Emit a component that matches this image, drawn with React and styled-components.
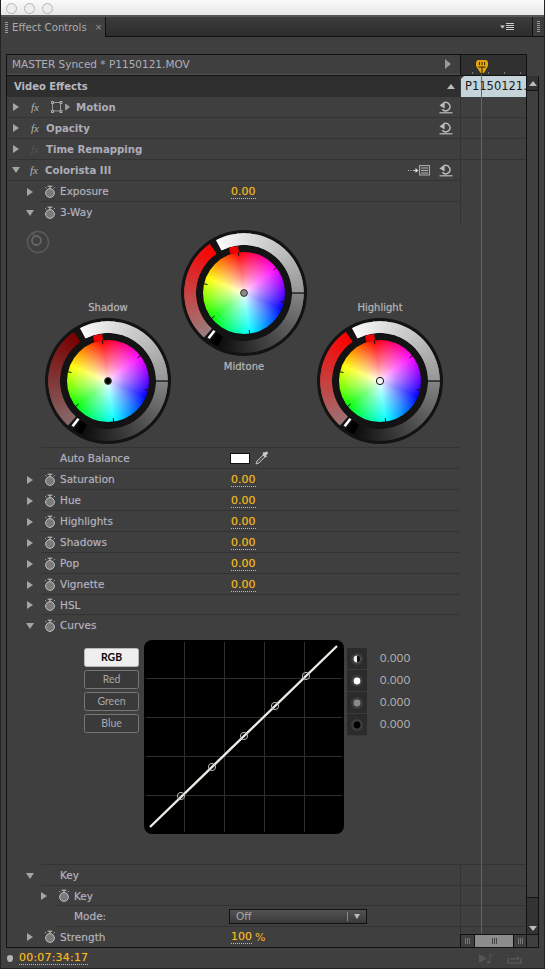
import React from 'react';
import styled, { createGlobalStyle } from 'styled-components';

const Global = createGlobalStyle`
  html, body { margin: 0; padding: 0; background: #3f3f3f; }
  * { box-sizing: border-box; }
`;
const UI = `"DejaVu Sans", "Liberation Sans", sans-serif`;
const Page = styled.div`
  width: 545px; height: 969px; overflow: hidden; background: #3f3f3f;
  display: flex; flex-direction: column; font-family: ${UI}; color: #adadb5;
  border-left: 1px solid #222; border-right: 1px solid #222; border-bottom: 1px solid #222;
`;
const TitleBar = styled.div`
  height: 17px; flex: none; margin: 0 -1px; padding: 3px 0 0 6px; display: flex; align-items: flex-start; gap: 7px;
  background: linear-gradient(#fbfbfb, #e6e6e6); border-bottom: 2px solid #555;
`;
const Traffic = styled.span`
  width: 11px; height: 11px; border-radius: 50%; background: #ededed; border: 1px solid #b5b5b5;
`;
const TabBar = styled.div`
  height: 20px; flex: none; display: flex; align-items: stretch;
  background: linear-gradient(#3c3c3c, #2c2c2c); border-bottom: 1px solid #111;
`;
const Tab = styled.div`
  width: 105px; margin-bottom: -1px; display: flex; align-items: center; background: #404040; white-space: nowrap;
  border-right: 1px solid #111; font-size: 10.2px; color: #ababab; padding-left: 4px; gap: 4px;
`;
const Grip = styled.span`
  width: 3px; height: 11px; flex: none;
  background: repeating-linear-gradient(#999 0 1px, transparent 1px 2px);
`;
const TabClose = styled.span` font-size: 9px; margin-left: 4px; color: #999; `;
const TabSpacer = styled.div` flex: 1; `;
const MenuSlot = styled.div`
  width: 30px; margin-right: 12px; display: flex; align-items: center; justify-content: flex-end; padding-right: 5px;
`;
const TabEnd = styled.div`
  width: 12px; border-left: 1px solid #111; display: flex; align-items: center; justify-content: center; background: #3c3c3c;
`;
const Frame = styled.div`
  margin: 17px 0 0 5px; display: grid; grid-template-columns: 454px 67px 12px; grid-template-rows: 22px auto;
`;
const MasterBar = styled.div`
  border: 1px solid #111; border-right: 0; display: flex; align-items: center; justify-content: space-between;
  font-size: 10.5px; padding: 0 9px 3px 5px; color: #afafb8; background: #3f3f3f;
  box-shadow: inset 0 -1px 0 #525252;
`;
const Ruler = styled.div`
  border: 1px solid #111; background: #303030; position: relative;
  background-image: linear-gradient(#777, #777), linear-gradient(#777, #777), linear-gradient(#777, #777), linear-gradient(#777, #777);
  background-size: 1px 2px; background-repeat: no-repeat;
  background-position: 11px 17px, 27px 17px, 43px 17px, 59px 17px;
`;
const PlayheadMark = styled.svg` position: absolute; left: 15px; top: 5px; `;
const Blank = styled.div``;
const Tree = styled.div` border-left: 1px solid #111; border-bottom: 1px solid #111; display: flex; flex-direction: column; `;
const HeaderRow = styled.div`
  height: 21px; background: #2f2f2f; display: flex; align-items: center; justify-content: space-between;
  padding: 0 5px 1px 7px; font-size: 10px; font-weight: 700; color: #b8b8c0;
`;
const Row = styled.div` height: ${p => p.$h || 21}px; display: flex; align-items: stretch; `;
const Gutter = styled.div`
  width: ${p => p.$w}px; flex: none; display: flex; align-items: center; padding-left: ${p => p.$w - 14}px;
`;
const RowBody = styled.div`
  flex: 1; min-width: 0; display: flex; align-items: center; position: relative;
  border-bottom: 1px solid ${p => (p.$noline ? 'transparent' : '#333')};
  padding-left: ${p => p.$pad || 0}px;
`;
const Twirl = styled.span`
  width: 0; height: 0; flex: none;
  ${p => p.$open
    ? 'border-left: 4.5px solid transparent; border-right: 4.5px solid transparent; border-top: 6px solid #a5a5a5; margin: 0 -2px 0 -1px;'
    : 'border-top: 4.5px solid transparent; border-bottom: 4.5px solid transparent; border-left: 6px solid #a5a5a5;'}
`;
const Fx = styled.span`
  font: italic 11px "Liberation Serif", serif; width: 15px; margin-left: 12px; flex: none;
  color: ${p => (p.$dim ? '#555' : '#b5b5b5')};
`;
const TopLabel = styled.span` font-size: 10.2px; font-weight: 700; color: #adadb9; `;
const SubLabel = styled.span`
  font-size: 10.5px; color: #b2b2be; width: ${p => p.$w || 170}px; flex: none; padding-left: ${p => p.$pad || 0}px;
  text-shadow: 0 0 1px rgba(178, 178, 190, .45);
`;
const Value = styled.span`
  font-size: 11px; color: #f7b91e; border-bottom: 1px dotted #f7b91e; line-height: 11px; padding-bottom: 1px; margin-top: 2px;
  text-shadow: 0 0 1px rgba(247, 185, 30, .45);
`;
const ValueUnit = styled.span` font-size: 11px; color: #f7b91e; margin: 2px 0 0 3px; `;
const Watch = styled.svg` flex: none; margin: 0 4px 0 3px; `;
const RightIcons = styled.div` margin-left: auto; display: flex; gap: 9px; align-items: center; padding-right: 7px; `;
const OffWrap = styled.div` display: flex; height: 225px; `;
const OffCell = styled.div` width: 34px; flex: none; padding: 7px 0 0 19px; `;
const OffIcon = styled.svg` display: block; overflow: visible; `;
const WheelPanel = styled.div`
  flex: 1; height: 225px; display: flex; border-bottom: 1px solid #333; align-items: flex-start; gap: 10px; padding-left: 4px;
`;
const WheelColumn = styled.div`
  width: 126px; display: flex; flex-direction: column; align-items: center; padding-top: ${p => p.$top}px;
`;
const WheelLabel = styled.div`
  height: 14px; line-height: 14px; font-size: 10px; color: #b4b4b4; margin: ${p => p.$m};
  text-shadow: 0 0 1px rgba(180, 180, 180, .6);
`;
const WheelSvg = styled.svg` display: block; flex: none; `;
const HueDisc = styled.div`
  width: 82px; height: 82px; border-radius: 50%;
  background:
    radial-gradient(closest-side, rgba(255,255,255,.95) 0, rgba(255,255,255,.5) 42%, rgba(255,255,255,0) 100%),
    conic-gradient(from -8deg, #f00, #f0f, #00f, #0ff, #0f0, #ff0, #f00);
`;
const Swatch = styled.span` width: 20px; height: 11px; background: #fff; border: 1px solid #111; flex: none; `;
const Dropper = styled.svg` margin-left: 5px; flex: none; `;
const CurvesArea = styled.div`
  height: 229px; border-bottom: 1px solid #333; margin-left: 34px; display: flex; align-items: flex-start;
  padding: 4px 0 0 43px;
`;
const ChannelList = styled.div` width: 55px; margin-top: 8px; display: flex; flex-direction: column; gap: 3px; flex: none; `;
const Channel = styled.div`
  height: 19px; border-radius: 2.5px; display: flex; align-items: center; justify-content: center; padding-bottom: 2px;
  font: ${p => (p.$on ? 700 : 400)} 10.5px "Lato", sans-serif;
  color: ${p => (p.$on ? '#0a0a0a' : '#a8a8a8')};
  background: ${p => (p.$on ? '#efefef' : '#3a3a3a')};
  border: 1px solid ${p => (p.$on ? '#b8b8b8' : '#777')};
`;
const CurveSvg = styled.svg` flex: none; margin-left: 5px; display: block; `;
const Zones = styled.div`
  width: 20px; margin: 8px 0 0 3px; flex: none; background: #2b2b2b; display: flex; flex-direction: column; padding: 0;
`;
const ZoneCell = styled.div` height: 22px; display: flex; align-items: center; justify-content: center; border-bottom: 1px solid #3a3a3a; `;
const ZoneVals = styled.div` margin: 8px 0 0 13px; display: flex; flex-direction: column; `;
const ZoneVal = styled.div` height: 22px; font: 400 11px/20px "Lato", sans-serif; letter-spacing: .5px; color: #b0b0b0; `;
const Dropdown = styled.div`
  width: 138px; height: 15px; border: 1px solid #111;
  background: linear-gradient(#525252, #3a3a3a); font-size: 10.5px; color: #a8a8a8; line-height: 12px; padding-left: 6px;
  display: flex; align-items: center; justify-content: space-between;
`;
const DropArrow = styled.span`
  width: 19px; height: 9px; border-left: 1px solid #888; display: flex; align-items: center; justify-content: center;
  &::after { content: ''; border-left: 3.5px solid transparent; border-right: 3.5px solid transparent; border-top: 5px solid #bbb; }
`;
const TimeCol = styled.div`
  position: relative; border-right: 1px solid #111; border-bottom: 1px solid #111; display: flex; flex-direction: column; min-width: 0;
`;
const Playline = styled.span` position: absolute; left: 21px; top: -2px; bottom: 13px; width: 1px; background: #c43c3c; `;
const Clip = styled.div`
  height: 21px; flex: none; overflow: hidden; white-space: nowrap; background: #c5d4da; color: #161a20;
  font-size: 11.5px; line-height: 20px; padding-left: 4px; margin-left: 1px;
  clip-path: polygon(3px 0, 100% 0, 100% 100%, 0 100%, 0 3px);
`;
const TimeRow = styled.div`
  height: ${p => p.$h || 21}px; flex: none; border-left: 1px solid #333;
  border-bottom: 1px solid ${p => (p.$line ? '#333' : 'transparent')};
`;
const TimeSpacer = styled.div` flex: 1; border-bottom: 1px solid #333; `;
const HScroll = styled.div`
  height: 13px; flex: none; margin-top: auto; border-top: 1px solid #111; display: grid; grid-template-columns: 14px 1fr 13px; background: #3f3f3f;
`;
const HEnd = styled.div`
  display: flex; align-items: center; justify-content: center; border-left: 1px solid #111;
`;
const HThumb = styled.div` background: #8c8c8c; border-left: 1px solid #111; display: flex; align-items: center; justify-content: center; `;
const HGrip = styled.span`
  width: ${p => p.$w}px; height: 6px;
  background: repeating-linear-gradient(90deg, ${p => p.$c} 0 1px, transparent 1px 2px);
`;
const VScroll = styled.div` border-right: 1px solid #111; border-bottom: 1px solid #111; display: flex; flex-direction: column; `;
const VUp = styled.div` height: 15px; flex: none; display: flex; justify-content: center; align-items: center; border-bottom: 1px solid #111; background: #333; `;
const VThumb = styled.div` flex: 1; border-bottom: 1px solid #111; background: #3f3f3f; `;
const VTrack = styled.div` height: 37px; flex: none; background: #333; display: flex; justify-content: center; align-items: flex-end; padding-bottom: 3px; border-bottom: 1px solid #111; `;
const VCorner = styled.div` height: 12px; flex: none; background: #3f3f3f; `;
const Tri = styled.span`
  width: 0; height: 0; border-left: 4px solid transparent; border-right: 4px solid transparent;
  ${p => (p.$down ? 'border-top: 5px solid #bbb;' : 'border-bottom: 5px solid #bbb;')}
`;
const TriRight = styled.span` width: 0; height: 0; border-top: 5px solid transparent; border-bottom: 5px solid transparent; border-left: 6px solid #999; `;
const Footer = styled.div` height: 20px; flex: none; display: flex; align-items: center; padding: 0 6px; `;
const FootDot = styled.span` width: 6px; height: 7px; border-radius: 50% 50% 50% 50% / 40% 40% 60% 60%; background: #b5b5b5; flex: none; `;
const FootTime = styled(Value)` margin: 0 0 0 6px; font-size: 11px; letter-spacing: .2px; `;
const FootIcons = styled.div` margin-left: auto; display: flex; gap: 13px; align-items: center; margin-right: 16px; `;

const rad = a => ((a - 90) * Math.PI) / 180;
const pt = (r, a) => [63 + r * Math.cos(rad(a)), 63 + r * Math.sin(rad(a))];
const BAND_R = 53.85, BAND_W = 11.7;
const arc = (a0, a1) => {
  const [x0, y0] = pt(BAND_R, a0), [x1, y1] = pt(BAND_R, a1);
  return `M${x0.toFixed(2)} ${y0.toFixed(2)}A${BAND_R} ${BAND_R} 0 0 1 ${x1.toFixed(2)} ${y1.toFixed(2)}`;
};
const mix = (c0, c1, t) => {
  const v = c0.map((c, i) => Math.round(c + (c1[i] - c) * t));
  return `rgb(${v.join(',')})`;
};
function Band({ from, to, c0, c1 }) {
  const parts = [];
  for (let a = from; a < to; a += 1) {
    const t = (a - from) / (to - from);
    parts.push(<path key={a} d={arc(a, Math.min(a + 2, to))} fill="none" strokeWidth={BAND_W} stroke={mix(c0, c1, t)} />);
  }
  return <>{parts}</>;
}
const TICKS = [-8, 52, 103, 172, 232, 283];
const REDS = {
  shadow: [[122, 0, 0], [135, 105, 105]],
  mid: [[255, 0, 0], [155, 125, 125]],
  high: [[255, 0, 0], [155, 115, 115]],
};
const DOTS = {
  shadow: { fill: '#000', stroke: '#444', r: 3.4 },
  mid: { fill: '#8a8a8a', stroke: '#333', r: 3.4 },
  high: { fill: '#f4f4f4', stroke: '#111', r: 3.6 },
};
function ColorWheel({ kind }) {
  const d = DOTS[kind], red = REDS[kind];
  const [tx0, ty0] = pt(48, 218), [tx1, ty1] = pt(57.5, 218);
  return (
    <WheelSvg width="126" height="126" viewBox="0 0 126 126">
      <circle cx="63" cy="63" r="63" fill="#131313" />
      <Band from={-28} to={90} c0={[250, 250, 250]} c1={[150, 150, 150]} />
      <Band from={90} to={206} c0={[132, 132, 132]} c1={[14, 14, 14]} />
      <path d={arc(206, 215)} fill="none" stroke="#000" strokeWidth={BAND_W} />
      <Band from={-138} to={-35} c0={red[1]} c1={red[0]} />
      <line x1={tx0} y1={ty0} x2={tx1} y2={ty1} stroke="#fff" strokeWidth="2.6" />
      <line x1="111" y1="63" x2="123" y2="63" stroke="#0a0a0a" strokeWidth="1.2" />
      <foreignObject x="22" y="22" width="82" height="82"><HueDisc /></foreignObject>
      {TICKS.map(a => {
        const [x0, y0] = pt(37.5, a), [x1, y1] = pt(41.5, a);
        return <line key={a} x1={x0} y1={y0} x2={x1} y2={y1} stroke="#111" strokeWidth="1" />;
      })}
      <rect x="-4.5" y="-3.3" width="9" height="6.6" fill="#f20000" transform={`translate(${pt(44.2, -13).join(' ')}) rotate(-9)`} />
      <circle cx="63" cy="63" r={d.r} fill={d.fill} stroke={d.stroke} strokeWidth="1" />
    </WheelSvg>
  );
}
const Stopwatch = () => (
  <Watch width="12" height="13" viewBox="0 0 12 13">
    <circle cx="6" cy="8" r="4.4" fill="#7a7a7a" stroke="#c0c0c0" strokeWidth="1" />
    <path d="M3.6 1.2h4.8M6 1.2v2.4M2.3 3.200l-1-.8M9.700 3.200l1-.8" stroke="#c8c8c8" strokeWidth="1" fill="none" />
  </Watch>
);
const Reset = () => (
  <svg width="14" height="13" viewBox="0 0 14 13" fill="none">
    <path d="M5 1.600a4.300 4.300 0 1 1-1.700 6.700" stroke="#bcbcbc" strokeWidth="1.400" />
    <path d="M.5 4.400L5.600 .6v7z" fill="#bcbcbc" />
    <path d="M.5 11.800h13" stroke="#bcbcbc" strokeWidth="1.200" />
  </svg>
);
const Preset = () => (
  <svg width="22" height="11" viewBox="0 0 22 11" fill="none">
    <path d="M0 5.500h1M2.500 5.500h1M5 5.500h2" stroke="#bbb" />
    <path d="M7 5.500h2" stroke="#ddd" />
    <path d="M7.500 3l3 2.500-3 2.500z" fill="#ddd" />
    <rect x="11.500" y=".5" width="10" height="9.500" fill="#4a4a4a" stroke="#aaa" />
    <path d="M13 3h7M13 5.500h7M13 8h7" stroke="#aaa" />
  </svg>
);
const MotionIcon = styled.svg` margin: 0 6px 0 5px; flex: none; `;
const MotionBox = () => (
  <MotionIcon width="19" height="12" viewBox="0 0 19 12" fill="none">
    <rect x="1.500" y="1.500" width="8" height="8.500" stroke="#9a9a9a" />
    <path d="M.5 .5h2v2h-2zM9 .5h2v2H9zM.5 9.500h2v2h-2zM9 9.500h2v2H9z" fill="#3f3f3f" stroke="#b5b5b5" />
    <path d="M14.500 3l4 3-4 3z" fill="#999" stroke="#b5b5b5" strokeWidth=".6" />
  </MotionIcon>
);
const POINTS = [[37, 156], [68, 127], [100, 96], [131, 66], [162, 36]];
function Curve() {
  return (
    <CurveSvg width="200" height="194" viewBox="0 0 200 194">
      <rect width="200" height="194" rx="8" fill="#000" />
      {[40, 80, 120, 160].map(x => <line key={x} x1={x + .5} x2={x + .5} y1="2" y2="192" stroke="#2e2e2e" />)}
      {[38, 77, 116, 155].map(y => <line key={y} y1={y + .5} y2={y + .5} x1="2" x2="198" stroke="#2e2e2e" />)}
      <line x1="6" y1="187" x2="193" y2="6" stroke="#ecece4" strokeWidth="2.400" />
      {POINTS.map(([x, y]) => <circle key={x} cx={x} cy={y} r="3.600" fill="none" stroke="#bbb" strokeWidth="1" />)}
    </CurveSvg>
  );
}
const ZoneDot = ({ fill, half }) => (
  <svg width="14" height="14" viewBox="0 0 14 14">
    <circle cx="7" cy="7" r="6" fill="#3c3c3c" />
    <circle cx="7" cy="7" r="3.400" fill={fill} />
    {half && <path d="M7 3.600a3.400 3.400 0 0 1 0 6.800z" fill="#111" />}
  </svg>
);
function SubRow({ label, value, open, noline, gutter = 34, h }) {
  return (
    <Row $h={h}>
      <Gutter $w={gutter}><Twirl $open={open} /></Gutter>
      <RowBody $noline={noline}>
        <Stopwatch />
        <SubLabel $w={171}>{label}</SubLabel>
        {value && <Value>{value}</Value>}
      </RowBody>
    </Row>
  );
}
const Plain = ({ children }) => (
  <Row>
    <RowBody $pad={6}>{children}</RowBody>
  </Row>
);

export default function App() {
  return (
    <Page>
      <Global />
      <TitleBar><Traffic /><Traffic /><Traffic /></TitleBar>
      <TabBar>
        <Tab><Grip />Effect Controls<TabClose>×</TabClose></Tab>
        <TabSpacer />
        <MenuSlot>
          <svg width="15" height="8" viewBox="0 0 15 8">
            <path d="M0 2.500h5l-2.500 3z" fill="#ccc" />
            <path d="M6 .5h8M6 2.500h8M6 4.500h8M6 6.500h8" stroke="#ccc" />
          </svg>
        </MenuSlot>
        <TabEnd><Grip /></TabEnd>
      </TabBar>
      <Frame>
        <MasterBar>MASTER Synced * P1150121.MOV<TriRight /></MasterBar>
        <Ruler>
          <PlayheadMark width="12" height="15" viewBox="0 0 12 15">
            <path d="M1.500 0h9l1.500 2v4l-4 7H4.500L0 6V2z" fill="#e0a30e" />
            <path d="M3.500 2v3M6 2v3M8.500 2v3" stroke="#3a2c00" />
            <path d="M2.500 7h7M6 7v8" stroke="#2a2000" strokeWidth="1" />
          </PlayheadMark>
        </Ruler>
        <Blank />
        <Tree>
          <HeaderRow>Video Effects<Tri /></HeaderRow>
          <Plain><Twirl /><Fx>fx</Fx><MotionBox /><TopLabel>Motion</TopLabel><RightIcons><Reset /></RightIcons></Plain>
          <Plain><Twirl /><Fx>fx</Fx><TopLabel>Opacity</TopLabel><RightIcons><Reset /></RightIcons></Plain>
          <Plain><Twirl /><Fx $dim>fx</Fx><TopLabel>Time Remapping</TopLabel></Plain>
          <Plain><Twirl $open /><Fx>fx</Fx><TopLabel>Colorista III</TopLabel><RightIcons><Preset /><Reset /></RightIcons></Plain>
          <SubRow label="Exposure" value="0.00" />
          <SubRow label="3-Way" open noline />
          <OffWrap>
            <OffCell>
              <OffIcon width="24" height="24" viewBox="0 0 24 24" fill="none">
                <circle cx="12" cy="12" r="10.500" stroke="#5a5a5a" strokeWidth="1.500" />
                <circle cx="10.500" cy="10.500" r="4.500" stroke="#666" strokeWidth="1.800" />
                <path d="M6 5.500l3-2" stroke="#5a5a5a" strokeWidth="1.200" />
              </OffIcon>
            </OffCell>
            <WheelPanel>
              <WheelColumn $top={78}>
                <WheelLabel $m="0 0 3px">Shadow</WheelLabel>
                <ColorWheel kind="shadow" />
              </WheelColumn>
              <WheelColumn $top={7}>
                <ColorWheel kind="mid" />
                <WheelLabel $m="4px 0 0">Midtone</WheelLabel>
              </WheelColumn>
              <WheelColumn $top={78}>
                <WheelLabel $m="0 0 3px">Highlight</WheelLabel>
                <ColorWheel kind="high" />
              </WheelColumn>
            </WheelPanel>
          </OffWrap>
          <Row>
            <Gutter $w={34} />
            <RowBody>
              <SubLabel $w={189} $pad={19}>Auto Balance</SubLabel>
              <Swatch />
              <Dropper width="14" height="14" viewBox="0 0 14 14" fill="none">
                <path d="M1 13l1-3 6-6 2 2-6 6z" fill="#555" stroke="#bbb" />
                <path d="M7.500 3l3.500 3.500 1-1-1-1 1.500-1.500a1.300 1.300 0 0 0-2-2L9 1.500l-.5-.5z" fill="#ccc" />
              </Dropper>
            </RowBody>
          </Row>
          {['Saturation', 'Hue', 'Highlights', 'Shadows', 'Pop', 'Vignette'].map(l => (
            <SubRow key={l} label={l} value="0.00" />
          ))}
          <SubRow label="HSL" h={20} />
          <SubRow label="Curves" open noline />
          <CurvesArea>
            <ChannelList>
              <Channel $on>RGB</Channel>
              <Channel>Red</Channel>
              <Channel>Green</Channel>
              <Channel>Blue</Channel>
            </ChannelList>
            <Curve />
            <Zones>
              <ZoneCell><ZoneDot fill="#eee" half /></ZoneCell>
              <ZoneCell><ZoneDot fill="#fff" /></ZoneCell>
              <ZoneCell><ZoneDot fill="#8a8a8a" /></ZoneCell>
              <ZoneCell><ZoneDot fill="#000" /></ZoneCell>
            </Zones>
            <ZoneVals>
              <ZoneVal>0.000</ZoneVal><ZoneVal>0.000</ZoneVal><ZoneVal>0.000</ZoneVal><ZoneVal>0.000</ZoneVal>
            </ZoneVals>
          </CurvesArea>
          <Row>
            <Gutter $w={34}><Twirl $open /></Gutter>
            <RowBody><SubLabel $pad={19}>Key</SubLabel></RowBody>
          </Row>
          <SubRow label="Key" gutter={48} h={20} />
          <Row>
            <Gutter $w={48} />
            <RowBody>
              <SubLabel $w={174} $pad={19}>Mode:</SubLabel>
              <Dropdown>Off<DropArrow /></Dropdown>
            </RowBody>
          </Row>
          <Row $h={20}>
            <Gutter $w={34}><Twirl /></Gutter>
            <RowBody $noline>
              <Stopwatch />
              <SubLabel $w={171}>Strength</SubLabel>
              <Value>100</Value><ValueUnit>%</ValueUnit>
            </RowBody>
          </Row>
        </Tree>
        <TimeCol>
          <Clip>P1150121.MOV</Clip>
          <TimeRow $line /><TimeRow $line /><TimeRow $line />
          <TimeRow $h={66} />
          <TimeSpacer />
          <TimeRow $line /><TimeRow $line $h={20} /><TimeRow $line />
          <TimeRow $h={7} />
          <HScroll>
            <HEnd><HGrip $w={5} $c="#777" /></HEnd>
            <HThumb><HGrip $w={5} $c="#444" /></HThumb>
            <HEnd><HGrip $w={5} $c="#777" /></HEnd>
          </HScroll>
          <Playline />
        </TimeCol>
        <VScroll>
          <VUp><Tri /></VUp>
          <VThumb />
          <VTrack><Tri $down /></VTrack>
          <VCorner />
        </VScroll>
      </Frame>
      <Footer>
        <FootDot />
        <FootTime>00:07:34:17</FootTime>
        <FootIcons>
          <svg width="15" height="11" viewBox="0 0 15 11">
            <path d="M0 1l8 4.500-8 4.500z" fill="#565656" />
            <path d="M11 9V1l3 2" stroke="#565656" fill="none" />
            <circle cx="9.500" cy="9" r="1.600" fill="#565656" />
          </svg>
          <svg width="15" height="11" viewBox="0 0 15 11" fill="none">
            <path d="M1 5v5h13V5" stroke="#565656" strokeWidth="1.600" />
            <path d="M3 5h7V3l3 2.500L10 8V6.500H3" fill="#565656" />
          </svg>
        </FootIcons>
      </Footer>
    </Page>
  );
}
